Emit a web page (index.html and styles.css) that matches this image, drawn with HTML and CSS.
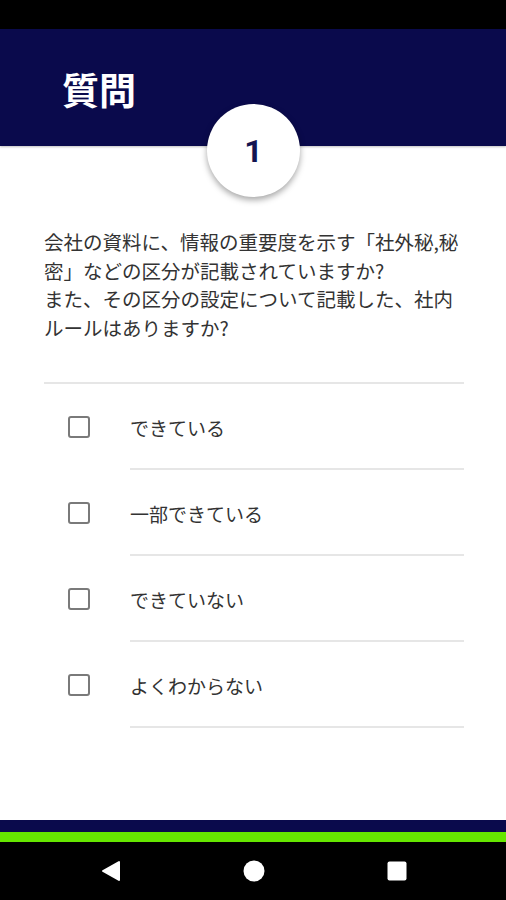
FILE: index.html
```html
<!DOCTYPE html>
<html lang="ja">
<head>
<meta charset="utf-8">
<link rel="stylesheet" href="styles.css">
</head>
<body>
<div class="screen">
  <div class="statusbar"></div>
  <header class="header">
    <h1 class="title">質問</h1>
    <div class="badge">1</div>
  </header>
  <main class="content">
    <p class="question">会社の資料に、情報の重要度を示す「社外秘,秘密」などの区分が記載されていますか?<br>また、その区分の設定について記載した、社内ルールはありますか?</p>
    <ul class="options">
      <li class="option"><span class="check"></span><span class="label">できている</span></li>
      <li class="option"><span class="check"></span><span class="label">一部できている</span></li>
      <li class="option"><span class="check"></span><span class="label">できていない</span></li>
      <li class="option"><span class="check"></span><span class="label">よくわからない</span></li>
    </ul>
  </main>
  <footer class="footer">
    <div class="navy-band"></div>
    <div class="green-band"></div>
    <nav class="navbar">
      <svg class="nav-icon" width="20" height="22" viewBox="0 0 20 22"><path d="M18 2 L18 20 L2 11 Z" fill="#fff" stroke="#fff" stroke-width="2" stroke-linejoin="round"/></svg>
      <svg class="nav-icon" width="22" height="22" viewBox="0 0 22 22"><circle cx="11" cy="11" r="10.5" fill="#fff"/></svg>
      <svg class="nav-icon" width="20" height="20" viewBox="0 0 20 20"><rect x="0.5" y="0.5" width="19" height="19" rx="2" fill="#fff"/></svg>
    </nav>
  </footer>
</div>
</body>
</html>
```
FILE: styles.css
```css
* { box-sizing: border-box; }
html, body { margin: 0; padding: 0; }
body {
  width: 506px;
  height: 900px;
  overflow: hidden;
  background: #fff;
  font-family: "Noto Sans CJK JP", "Noto Sans", sans-serif;
}
.screen {
  width: 506px;
  height: 900px;
  display: flex;
  flex-direction: column;
}
.statusbar {
  height: 29px;
  background: #000;
  flex: none;
}
.header {
  position: relative;
  height: 117px;
  flex: none;
  background: #0a0a4c;
  display: flex;
  align-items: center;
  padding-left: 62px;
  box-shadow: 0 1px 2px rgba(0,0,0,0.25);
  z-index: 1;
}
.title {
  margin: 0;
  margin-top: 3px;
  color: #fff;
  font-size: 37px;
  font-weight: 700;
  line-height: 1;
  letter-spacing: 0;
}
.badge {
  position: absolute;
  left: 207px;
  top: 75px;
  width: 93px;
  height: 93px;
  border-radius: 50%;
  background: #fff;
  box-shadow: 0 3px 6px rgba(0,0,0,0.35);
  display: flex;
  align-items: center;
  justify-content: center;
  color: #141450;
  font-family: Roboto, "Noto Sans", sans-serif;
  font-weight: 700;
  font-size: 32px;
  line-height: 1;
}
.content {
  flex: 1;
  padding: 0 42px 0 44px;
}
.question {
  margin: 0;
  padding-top: 82px;
  padding-bottom: 40px;
  font-size: 19.5px;
  line-height: 28.5px;
  color: #333;
  border-bottom: 2px solid #e6e6e6;
}
.options {
  list-style: none;
  margin: 0;
  padding: 0;
}
.option {
  display: flex;
  align-items: center;
  height: 86px;
  padding-left: 24px;
}
.check {
  flex: none;
  width: 22px;
  height: 22px;
  border: 2px solid #7a7a7a;
  border-radius: 3px;
  margin-right: 40px;
  margin-top: -1px;
}
.label {
  flex: 1;
  align-self: stretch;
  display: flex;
  align-items: center;
  font-size: 19px;
  color: #333;
  border-bottom: 2px solid #e6e6e6;
  padding-top: 2px;
}
.footer {
  flex: none;
}
.navy-band {
  height: 12px;
  background: #0a0a4c;
}
.green-band {
  height: 10px;
  background: #66e600;
}
.navbar {
  height: 58px;
  background: #000;
  display: flex;
  align-items: center;
  justify-content: space-between;
  padding: 0 99px 0 101px;
}
.nav-icon { display: block; }
```
